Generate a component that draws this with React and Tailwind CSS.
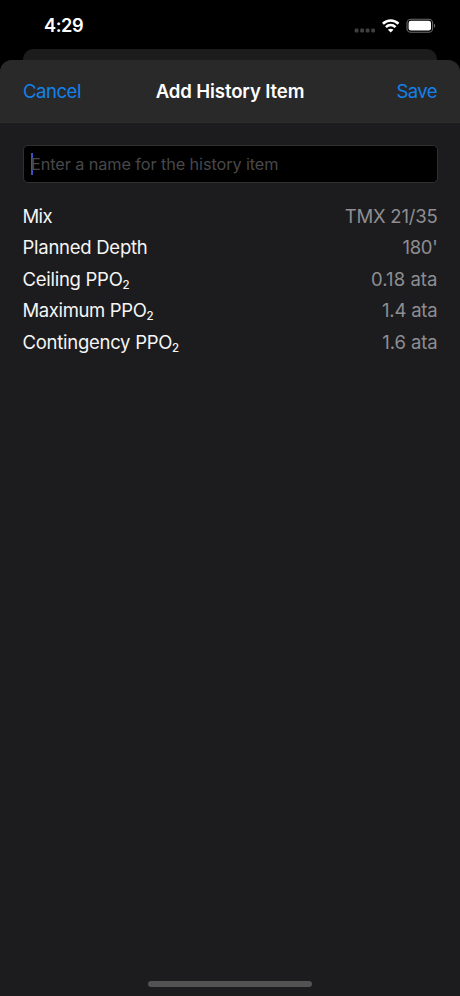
import React from "react";

const rows = [
  { label: "Mix", value: "TMX 21/35", ls: "tracking-[-0.6px]", vs: "tracking-[-0.2px]" },
  { label: "Planned Depth", value: "180'", ls: "tracking-[-0.26px]", vs: "tracking-[-0.3px]" },
  { label: "Ceiling PPO", sub: true, value: "0.18 ata", ls: "tracking-[-0.27px]", vs: "tracking-[0.05px]" },
  { label: "Maximum PPO", sub: true, value: "1.4 ata", ls: "tracking-[-0.37px]", vs: "tracking-[-0.2px]" },
  { label: "Contingency PPO", sub: true, value: "1.6 ata", ls: "tracking-[-0.27px]", vs: "tracking-[-0.1px]" },
];

function StatusBar() {
  return (
    <div className="flex h-[49px] shrink-0 items-center justify-between pl-11 pr-6 pt-[2px] text-white">
      <span className="text-[18.2px] font-semibold leading-none tracking-[-0.4px]">4:29</span>
      <svg width="82" height="20" viewBox="354 15.5 82 20" fill="none">
        <g fill="#3f3f40">
          <rect x="354.7" y="28" width="3.8" height="4" rx="1.2" />
          <rect x="360.2" y="28" width="3.8" height="4" rx="1.2" />
          <rect x="365.7" y="28" width="3.8" height="4" rx="1.2" />
          <rect x="371.2" y="28" width="3.8" height="4" rx="1.2" />
        </g>
        <g stroke="#fff" strokeWidth="2.6">
          <path d="M382.9 23.3C387.4 18.9 394 18.9 398.5 23.3" />
          <path d="M385.9 26.6C388.7 23.9 392.7 23.9 395.5 26.6" />
        </g>
        <path d="M390.7 32L387.9 29.2C389.4 27.8 392 27.8 393.5 29.2Z" fill="#fff" />
        <rect x="407" y="18.7" width="25.6" height="13" rx="3.8" stroke="#6b6b6b" strokeWidth="1.1" />
        <rect x="408.6" y="20.3" width="22.4" height="9.8" rx="2.3" fill="#fff" />
        <path d="M434 23.2C435.7 23.8 435.7 26.6 434 27.2Z" fill="#6b6b6b" />
      </svg>
    </div>
  );
}

export default function App() {
  return (
    <div className="flex h-[996px] w-[460px] flex-col overflow-hidden bg-black font-['Inter','Liberation_Sans',sans-serif] text-[18.5px]">
      <StatusBar />
      <div className="mx-[23px] h-[11px] shrink-0 rounded-t-[10px] bg-[#1c1c1d]" />
      <main className="flex flex-1 flex-col rounded-t-[12px] bg-[#1c1c1e]">
        <header className="grid h-[63px] shrink-0 grid-cols-[1fr_auto_1fr] items-center rounded-t-[12px] border-b border-[#2c2c2d] bg-[#29292a] px-[23px] pt-[2px]">
          <button className="justify-self-start tracking-[-0.45px] text-[#1282ea]">Cancel</button>
          <h1 className="text-[18.6px] font-semibold tracking-[-0.13px] text-white">Add History Item</h1>
          <button className="justify-self-end tracking-[-0.6px] text-[#1282ea]">Save</button>
        </header>
        <div className="flex flex-col px-[22.5px] pt-[22px]">
          <div className="flex h-[37.5px] items-center rounded-[5px] border border-[#303032] bg-black pl-[7.5px]">
            <div className="h-[22px] w-[2px] shrink-0 bg-[#3b50c0]" />
            <span className="-ml-[2px] text-[16.3px] tracking-[-0.1px] text-[#48484a]">Enter a name for the history item</span>
          </div>
          <dl className="mt-[18.5px] flex flex-col">
            {rows.map((r) => (
              <div key={r.label} className="flex h-[31.5px] items-center justify-between">
                <dt className={`text-[#f5f5f5] ${r.ls}`}>
                  {r.label}
                  {r.sub && <span className="relative top-[3px] text-[11.5px] font-medium leading-none">2</span>}
                </dt>
                <dd className={`text-[#8e8e92] ${r.vs}`}>{r.value}</dd>
              </div>
            ))}
          </dl>
        </div>
        <div className="mx-auto mb-[9px] mt-auto h-[6px] w-[164px] rounded-full bg-[#525253]" />
      </main>
    </div>
  );
}
